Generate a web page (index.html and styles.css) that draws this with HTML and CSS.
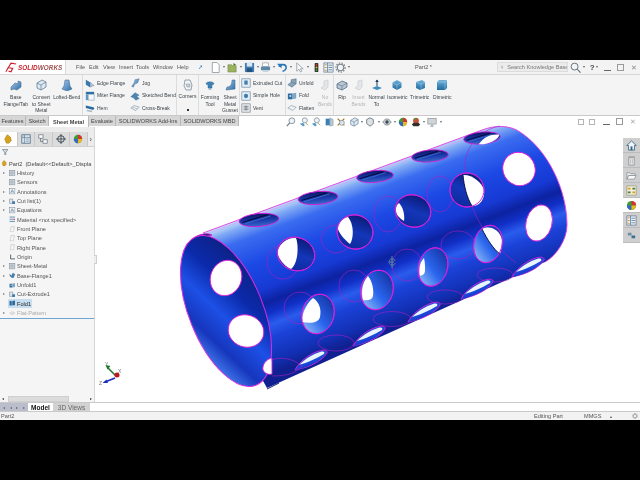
FILE: index.html
```html
<!DOCTYPE html>
<html lang="en">
<head>
<meta charset="utf-8">
<title>Part2 - SOLIDWORKS</title>
<link rel="stylesheet" href="styles.css">
</head>
<body>
<svg class="defs" width="0" height="0" aria-hidden="true">
  <defs>
    <linearGradient id="g-blue" x1="0" y1="0" x2="1" y2="1"><stop offset="0" stop-color="#a9c7ea"/><stop offset="1" stop-color="#2c6ea8"/></linearGradient>
    <linearGradient id="g-cube" x1="0" y1="0" x2="0" y2="1"><stop offset="0" stop-color="#6fb2dc"/><stop offset="1" stop-color="#1f6a9e"/></linearGradient>
    <symbol id="i-sheet" viewBox="0 0 12 12"><path d="M1 8 5 4l3 1V2l3 1v5l-4 3-3-1-3 1z" fill="url(#g-blue)" stroke="#46708f" stroke-width=".6"/></symbol>
    <symbol id="i-box" viewBox="0 0 12 12"><path d="M2 4 7 1l4 2v5l-5 3-4-2z" fill="#dfe8f0" stroke="#4b6f8e" stroke-width=".7"/><path d="M2 4l4 2 5-3M6 6v5" fill="none" stroke="#4b6f8e" stroke-width=".6"/></symbol>
    <symbol id="i-loft" viewBox="0 0 12 12"><path d="M4 1h4l1 6 2 3-5 2-5-2 2-3z" fill="url(#g-blue)" stroke="#2c5f88" stroke-width=".5"/></symbol>
    <symbol id="i-edge" viewBox="0 0 12 12"><path d="M1 2l5 3v6L1 8z" fill="#3a78b0"/><path d="M6 5l5 4-5 2z" fill="#a8c4dc" stroke="#456" stroke-width=".3"/></symbol>
    <symbol id="i-miter" viewBox="0 0 12 12"><path d="M1 1h10v3H1z" fill="#2f6fa5"/><path d="M1 4h3v7H1z" fill="#5c9ac8"/><path d="M4 4h7v7H4z" fill="#f4f8fb" stroke="#5a7f9c" stroke-width=".5"/></symbol>
    <symbol id="i-hem" viewBox="0 0 12 12"><path d="M1 3l9 2c2 1 1 3-1 3L1 6z" fill="#2d6aa0"/><path d="M2 8l7 1-1 2-6-1z" fill="#a9bdcd"/></symbol>
    <symbol id="i-jog" viewBox="0 0 12 12"><path d="M2 10l3-4 1-4 5-1-2 5-3 1-2 4z" fill="url(#g-blue)" stroke="#3f6a8c" stroke-width=".5"/></symbol>
    <symbol id="i-bend" viewBox="0 0 12 12"><path d="M1 7l5-5 5 3-3 1 3 3-4 2-3-3z" fill="#4a86b4" stroke="#2a4f70" stroke-width=".4"/></symbol>
    <symbol id="i-cross" viewBox="0 0 12 12"><path d="M1 6l4-3 6 2-4 4z" fill="#eef2f5" stroke="#7b8d9b" stroke-width=".7"/><path d="M3 5l6 2" stroke="#7b8d9b" stroke-width=".5"/></symbol>
    <symbol id="i-corner" viewBox="0 0 12 12"><path d="M3 1h5l2 5-1 5H4L2 7z" fill="#f2f4f6" stroke="#6e7f8c" stroke-width=".7"/><path d="M4 5h4v3H5z" fill="#c7d2da" stroke="#6e7f8c" stroke-width=".4"/></symbol>
    <symbol id="i-form" viewBox="0 0 12 12"><path d="M2 5c0-3 8-3 8 0l-2 1v3H4V6z" fill="#3f83b6" stroke="#255f88" stroke-width=".4"/><path d="M4 9h4l-1 2H5z" fill="#9fb8ca"/></symbol>
    <symbol id="i-gusset" viewBox="0 0 12 12"><path d="M8 1h3v9l-9 1 1-3c3 0 5-2 5-7z" fill="url(#g-blue)" stroke="#2e5f87" stroke-width=".5"/></symbol>
    <symbol id="i-cut" viewBox="0 0 12 12"><rect x="1" y="1" width="10" height="10" fill="#e6edf3" stroke="#527a9b" stroke-width=".7"/><path d="M4 3h4v5H4z" fill="#3f7fb2"/></symbol>
    <symbol id="i-hole" viewBox="0 0 12 12"><rect x="1" y="1" width="10" height="10" fill="#e6edf3" stroke="#527a9b" stroke-width=".7"/><circle cx="6" cy="6" r="2.6" fill="#3f7fb2"/></symbol>
    <symbol id="i-vent" viewBox="0 0 12 12"><rect x="1" y="1" width="10" height="10" fill="#e6e9ec" stroke="#6b7680" stroke-width=".7"/><path d="M3 4h6M3 6h6M3 8h6M6 3v6" stroke="#555f68" stroke-width=".7"/></symbol>
    <symbol id="i-unfold" viewBox="0 0 12 12"><path d="M1 8l4-3V2l6-1v6l-5 4z" fill="#8aa5ba" stroke="#34556f" stroke-width=".5"/><path d="M5 5l6 2" stroke="#34556f" stroke-width=".4"/></symbol>
    <symbol id="i-fold" viewBox="0 0 12 12"><path d="M1 3h5v7H1z" fill="#2f6da3"/><path d="M6 3l5-1v7l-5 1z" fill="#7da7c6"/><path d="M3 5h2v2H3z" fill="#dde7ef"/></symbol>
    <symbol id="i-flatten" viewBox="0 0 12 12"><path d="M1 6l4-3 6 2-4 4z" fill="#edf1f4" stroke="#7e919f" stroke-width=".7"/></symbol>
    <symbol id="i-nobend" viewBox="0 0 12 12"><path d="M2 9l3-2V2l4-1v7l-3 3z" fill="#e4e6e8" stroke="#c4c8cb" stroke-width=".6"/></symbol>
    <symbol id="i-rip" viewBox="0 0 12 12"><path d="M1 5l5-3 5 2v4l-5 3-5-2z" fill="#b8c7d3" stroke="#43607a" stroke-width=".7"/><path d="M1 5l5 2 5-3M6 7v4" fill="none" stroke="#43607a" stroke-width=".5"/></symbol>
    <symbol id="i-normal" viewBox="0 0 12 12"><path d="M1 9l5-2 5 2-5 2z" fill="#3e8bc0"/><path d="M6 1v6" stroke="#1d3f5c" stroke-width="1"/><path d="M4.2 3 6 .5 7.8 3z" fill="#1d3f5c"/></symbol>
    <symbol id="i-iso" viewBox="0 0 12 12"><path d="M6 1l4.500 2.500v5L6 11 1.500 8.500v-5z" fill="url(#g-cube)"/><path d="M1.500 3.500 6 6l4.500-2.500M6 6v5" fill="none" stroke="#cfe3f0" stroke-width=".4"/></symbol>
    <symbol id="i-tri" viewBox="0 0 12 12"><path d="M2 3l6-2 3 2v6l-5 2-4-2z" fill="url(#g-cube)"/><path d="M2 3l5 2 4-2M7 5v6" fill="none" stroke="#cfe3f0" stroke-width=".4"/></symbol>
    <symbol id="i-dim" viewBox="0 0 12 12"><path d="M3 1h8v8l-2 2H1V3z" fill="url(#g-cube)"/><path d="M1 3h8l2-2M9 3v8" fill="none" stroke="#cfe3f0" stroke-width=".4"/></symbol>
    <symbol id="i-doc" viewBox="0 0 12 12"><path d="M2.500 .5h5l2.500 2.500v8.500h-7.500z" fill="#fff" stroke="#7d8a94" stroke-width=".8"/></symbol>
    <symbol id="i-open" viewBox="0 0 12 12"><path d="M1 3h4l1 1h4v7H1z" fill="#9bb35e" stroke="#5f7434" stroke-width=".5"/><path d="M7 4V1l3 2z" fill="#4c7a23"/></symbol>
    <symbol id="i-save" viewBox="0 0 12 12"><rect x="1" y="1" width="10" height="10" fill="#3f7bb0"/><rect x="3" y="1" width="6" height="4" fill="#dbe7f0"/><rect x="3" y="7" width="6" height="4" fill="#22527c"/></symbol>
    <symbol id="i-print" viewBox="0 0 12 12"><rect x="3" y="1" width="6" height="4" fill="#fff" stroke="#74818c" stroke-width=".6"/><rect x="1" y="5" width="10" height="4" fill="#5b87a9"/><rect x="3" y="9" width="6" height="2" fill="#c7d3dc"/></symbol>
    <symbol id="i-undo" viewBox="0 0 12 12"><path d="M2 5c2-3 8-3 8 1 0 2-2 4-4 4" fill="none" stroke="#2a77b8" stroke-width="1.700"/><path d="M0 2h5v5z" fill="#2a77b8"/></symbol>
    <symbol id="i-arrow" viewBox="0 0 12 12"><path d="M3 1v9l2.500-2 1.500 3 1.500-.8-1.500-2.800h3z" fill="#f8f8f8" stroke="#7b8791" stroke-width=".7"/></symbol>
    <symbol id="i-light" viewBox="0 0 12 12"><rect x="4" y="1" width="4" height="10" rx="1" fill="#333"/><circle cx="6" cy="3" r="1" fill="#d9342b"/><circle cx="6" cy="6" r="1" fill="#e9b91f"/><circle cx="6" cy="9" r="1" fill="#3f9c35"/></symbol>
    <symbol id="i-list" viewBox="0 0 12 12"><rect x="1" y="1" width="10" height="10" fill="#eef2f5" stroke="#61788b" stroke-width=".8"/><path d="M5 1v10M6 3.500h4M6 6h4M6 8.500h4" stroke="#3f6f95" stroke-width=".8"/><path d="M2 3h2M2 6h2M2 9h2" stroke="#d08a2e" stroke-width="1"/></symbol>
    <symbol id="i-gear" viewBox="0 0 12 12"><circle cx="6" cy="6" r="3.500" fill="none" stroke="#77838c" stroke-width="1.200"/><circle cx="6" cy="6" r="5" fill="none" stroke="#77838c" stroke-width="1.300" stroke-dasharray="1.500 1.500"/></symbol>
    <symbol id="i-search" viewBox="0 0 12 12"><circle cx="5" cy="5" r="3.800" fill="none" stroke="#5d6b76" stroke-width="1"/><path d="M8 8l3.500 3.500" stroke="#5d6b76" stroke-width="1.200"/></symbol>
    <symbol id="i-zoomfit" viewBox="0 0 12 12"><circle cx="7" cy="4.500" r="3.500" fill="#eef3f7" stroke="#6c7d8a" stroke-width=".9"/><path d="M4.500 7 1 11" stroke="#6c7d8a" stroke-width="1.400"/></symbol>
    <symbol id="i-prev" viewBox="0 0 12 12"><path d="M1 8l4-1 2 3-2 1.500z" fill="#5f9ac5"/><circle cx="7" cy="4" r="3" fill="#eef3f7" stroke="#6c7d8a" stroke-width=".8"/><path d="M8 7l3 3" stroke="#8a4" stroke-width="1"/></symbol>
    <symbol id="i-section" viewBox="0 0 12 12"><path d="M2 2h5v8H2z" fill="#3e7fb3"/><path d="M7 1l4 2v7l-4 1z" fill="#b7c8d5" stroke="#53708a" stroke-width=".4"/></symbol>
    <symbol id="i-dyn" viewBox="0 0 12 12"><path d="M2 2l8 8M10 2l-8 8" stroke="#a8741f" stroke-width="1.500"/><circle cx="7" cy="7" r="3" fill="#d9e3ea" stroke="#5a7084" stroke-width=".6"/></symbol>
    <symbol id="i-hide" viewBox="0 0 12 12"><path d="M1 6c3-5 7-5 10 0-3 5-7 5-10 0z" fill="#c9d0d5" stroke="#55616b" stroke-width=".7"/><circle cx="6" cy="6" r="2" fill="#3c4750"/></symbol>
    <symbol id="i-ball" viewBox="0 0 12 12"><circle cx="6" cy="6" r="5" fill="#3f9a3c"/><path d="M6 1a5 5 0 0 1 5 5H6z" fill="#d9342b"/><path d="M1 6a5 5 0 0 0 5 5V6z" fill="#2f68c5"/><path d="M6 6h5a5 5 0 0 1-5 5z" fill="#e8b81f"/></symbol>
    <symbol id="i-scene" viewBox="0 0 12 12"><circle cx="6" cy="4.500" r="3.500" fill="#c9513a"/><path d="M3 4a3 3 0 0 1 5-2z" fill="#3f9a3c"/><path d="M1 9l2-2h6l2 2-2 2H3z" fill="#33302c"/></symbol>
    <symbol id="i-monitor" viewBox="0 0 12 12"><rect x="1" y="1.500" width="10" height="7" fill="#d1d5d8" stroke="#7c868e" stroke-width=".7"/><path d="M4 11h4M6 9v2" stroke="#7c868e"/></symbol>
    <symbol id="i-home" viewBox="0 0 12 12"><path d="M6 1 .8 6h2v5h6.400V6h2z" fill="#eef4f8" stroke="#30627f" stroke-width=".9"/><rect x="5" y="7" width="2" height="4" fill="#30627f"/></symbol>
    <symbol id="i-trash" viewBox="0 0 12 12"><path d="M3 3h6v8H3zM2.500 2h7" fill="#eaeaea" stroke="#858b90" stroke-width=".8"/><path d="M5 4.500v5M7 4.500v5" stroke="#858b90" stroke-width=".5"/></symbol>
    <symbol id="i-folder" viewBox="0 0 12 12"><path d="M1 3h3l1 1h5v2H3L1 10z" fill="#eee" stroke="#7a8288" stroke-width=".7"/><path d="M1 10l2-4h8l-2 4z" fill="#f8f8f8" stroke="#7a8288" stroke-width=".7"/></symbol>
    <symbol id="i-appear" viewBox="0 0 12 12"><rect x="1" y="1" width="10" height="10" fill="#f2eddc" stroke="#7f8a55" stroke-width=".6"/><path d="M2 3h3v2H2zM7 7h3v2H7z" fill="#d6a61e"/><path d="M7 3h3v2H7zM2 7h3v2H2z" fill="#4b7f3a"/></symbol>
    <symbol id="i-small" viewBox="0 0 12 12"><path d="M2 3h4v3H2z" fill="#6f8ea5"/><path d="M6 6h4v3H6z" fill="#3b6f96"/></symbol>
    <symbol id="i-cube" viewBox="0 0 12 12"><path d="M6 1l4 2v5l-4 3-4-3V3z" fill="#dde2e5" stroke="#596773" stroke-width=".9"/></symbol>
    <symbol id="i-feat" viewBox="0 0 12 12"><path d="M2 6l3-5 2 1 2 2 1 4-3 3H4z" fill="#d9a21c" stroke="#8d6a10" stroke-width=".5"/></symbol>
    <symbol id="i-prop" viewBox="0 0 12 12"><rect x="1" y="1" width="10" height="10" fill="#e8eef3" stroke="#39617f" stroke-width=".9"/><path d="M1 4h10M4 1v10M5.500 6h4M5.500 8.500h4" stroke="#39617f" stroke-width=".7"/></symbol>
    <symbol id="i-config" viewBox="0 0 12 12"><rect x="1" y="1" width="5" height="4" fill="#fff" stroke="#596773" stroke-width=".8"/><rect x="6" y="7" width="5" height="4" fill="#fff" stroke="#596773" stroke-width=".8"/><path d="M3 5v4h3" fill="none" stroke="#596773" stroke-width=".8"/></symbol>
    <symbol id="i-dim2" viewBox="0 0 12 12"><circle cx="6" cy="6" r="4" fill="none" stroke="#27333c" stroke-width="1"/><path d="M6 0v12M0 6h12" stroke="#27333c" stroke-width=".9"/></symbol>
    <symbol id="i-filter" viewBox="0 0 12 12"><path d="M1 1h10L7 6v5L5 10V6z" fill="#d9e3ea" stroke="#3f5d72" stroke-width="1"/></symbol>
    <symbol id="i-folder-t" viewBox="0 0 12 12"><rect x="1" y="1" width="10" height="10" fill="#dde3e7" stroke="#5d7283" stroke-width=".8"/><path d="M4 1v10M7 1v10M1 4h10M1 7h10" stroke="#5d7283" stroke-width=".5"/></symbol>
    <symbol id="i-annot" viewBox="0 0 12 12"><rect x="1" y="1" width="10" height="10" fill="#eef2f5" stroke="#5d7283" stroke-width=".8"/><path d="M3 9l3-6 3 6M4 7h4" fill="none" stroke="#3f6f95" stroke-width=".9"/></symbol>
    <symbol id="i-cutlist" viewBox="0 0 12 12"><path d="M1 2h6v8H1z" fill="#dfe6eb" stroke="#49606f" stroke-width=".7"/><path d="M6 6h5v5H6z" fill="#3a7bb0"/></symbol>
    <symbol id="i-mat" viewBox="0 0 12 12"><path d="M1 2h10M1 6h8M1 10h10" stroke="#3a6f99" stroke-width="1.400"/><path d="M9 5h2v2H9z" fill="#c14" /></symbol>
    <symbol id="i-plane" viewBox="0 0 12 12"><path d="M4 1h6L8 11H2z" fill="none" stroke="#7e8c97" stroke-width=".8" stroke-dasharray="1.500 .8"/></symbol>
    <symbol id="i-origin" viewBox="0 0 12 12"><path d="M3 1v8h8" fill="none" stroke="#2b3134" stroke-width="1.300"/></symbol>
    <symbol id="i-flange" viewBox="0 0 12 12"><path d="M1 4l4 3 2-5 4 2-3 7-3-1-3-2z" fill="#3f7fb2" stroke="#1f5276" stroke-width=".4"/></symbol>
    <symbol id="i-foldtree" viewBox="0 0 12 12"><path d="M1 2h4v8H1z" fill="#2c6699"/><path d="M6 2l5-1v8l-5 1z" fill="#2c6699"/></symbol>
    <symbol id="i-flat" viewBox="0 0 12 12"><path d="M1 6l4-3 6 2-4 4z" fill="#dfe3e6" stroke="#a6aeb4" stroke-width=".6"/></symbol>

    <linearGradient id="body" gradientUnits="userSpaceOnUse" x1="345" y1="180" x2="400" y2="325">
      <stop offset="0" stop-color="#c3dcfa"/><stop offset=".05" stop-color="#7fa9f4"/><stop offset=".13" stop-color="#3a6cf0"/>
      <stop offset=".3" stop-color="#1c48e4"/><stop offset=".47" stop-color="#1739d4"/><stop offset=".56" stop-color="#0c22a0"/>
      <stop offset=".63" stop-color="#1230c8"/><stop offset=".7" stop-color="#2a5cec"/><stop offset=".78" stop-color="#1b42d8"/>
      <stop offset=".92" stop-color="#1230b4"/><stop offset="1" stop-color="#102090"/>
    </linearGradient>
    <linearGradient id="inner" gradientUnits="userSpaceOnUse" x1="190" y1="245" x2="255" y2="385">
      <stop offset="0" stop-color="#0a1560"/><stop offset=".22" stop-color="#0d2490"/><stop offset=".36" stop-color="#0b2aaa"/>
      <stop offset=".52" stop-color="#1d50e6"/><stop offset=".68" stop-color="#1636bd"/><stop offset=".8" stop-color="#3f74e8"/>
      <stop offset=".9" stop-color="#1a3cc2"/><stop offset=".96" stop-color="#8cc0f4"/><stop offset="1" stop-color="#0c1e80"/>
    </linearGradient>
    <linearGradient id="wall" x1="0" y1="0" x2="0" y2="1"><stop offset="0" stop-color="#0b1b7a"/><stop offset=".5" stop-color="#1436b8"/><stop offset="1" stop-color="#0e2a9e"/></linearGradient>
    <linearGradient id="wall-light" x1=".8" y1="0" x2=".2" y2="1"><stop offset="0" stop-color="#13309f"/><stop offset=".55" stop-color="#2a66ee"/><stop offset="1" stop-color="#8fbcf6"/></linearGradient>
    <linearGradient id="wall-top" x1="0" y1="0" x2="0" y2="1"><stop offset="0" stop-color="#0a1560"/><stop offset=".55" stop-color="#1c3cb0"/><stop offset="1" stop-color="#3c6cc8"/></linearGradient>
    <g id="slot">
      <ellipse class="edge wall-top-fill" rx="20" ry="6.500"/>
      <path class="stripe-dark" d="M-17 1 9-4.500"/>
      <path class="stripe-soft" d="M-14 2.500 12-3"/>
    </g>
    <g id="low">
      <path class="edge low-fill" d="M-16 10C-12 2-2-6 8-9c6-2 9 0 8 2C12 0 0 7-16 10z"/>
      <path class="low-white" d="M-12 5C-6-1 2-6 9-8c4-1 5 0 4 2C6-2-4 3-12 5z"/>
      <path class="low-dark" d="M-16 10C-8 9 2 4 9 0c-8 2-18 5-25 10z"/>
    </g>
  </defs>
</svg>

<div class="letterbox"></div>
<div class="app">
  <header class="titlebar">
    <div class="logo">
      <svg class="logo-mark" viewBox="0 0 14 12"><path d="M1 11 7 1l6 1M3 6l6 1-2 4-3-1" fill="none" stroke="#c8202a" stroke-width="1.300"/></svg>
      <span class="logo-text"><b>SOLID</b>WORKS</span>
    </div>
    <nav class="menu">
      <span class="m1">File</span><span class="m2">Edit</span><span class="m3">View</span><span class="m4">Insert</span><span class="m5">Tools</span><span class="m6">Window</span><span class="m7">Help</span><span class="m8">➚</span>
    </nav>
    <div class="quick">
      <svg class="qi"><use href="#i-doc"/></svg><i class="dd"></i>
      <svg class="qi"><use href="#i-open"/></svg><i class="dd"></i>
      <svg class="qi"><use href="#i-save"/></svg><i class="dd"></i>
      <svg class="qi"><use href="#i-print"/></svg><i class="dd"></i>
      <svg class="qi"><use href="#i-undo"/></svg><i class="dd"></i>
      <svg class="qi"><use href="#i-arrow"/></svg><i class="dd"></i>
      <svg class="qi"><use href="#i-light"/></svg>
      <svg class="qi"><use href="#i-list"/></svg>
      <svg class="qi"><use href="#i-gear"/></svg><i class="dd"></i>
    </div>
    <div class="doc-name">Part2 *</div>
    <div class="search"><span class="search-q">♀</span><span>Search Knowledge Base</span></div>
    <div class="title-end">
      <svg class="qi s-search"><use href="#i-search"/></svg><i class="dd"></i>
      <span class="help">?</span><i class="dd"></i>
      <span class="win min"></span><span class="win box"></span><span class="win cls">✕</span>
    </div>
  </header>

  <section class="ribbon">
    <div class="grp g1">
      <div class="tool"><svg class="big"><use href="#i-sheet"/></svg><span>Base<br>Flange/Tab</span></div>
      <div class="tool"><svg class="big"><use href="#i-box"/></svg><span>Convert<br>to Sheet<br>Metal</span></div>
      <div class="tool"><svg class="big"><use href="#i-loft"/></svg><span>Lofted-Bend</span></div>
    </div>
    <div class="grp g2">
      <div class="col c-a">
        <div class="line"><svg class="sm"><use href="#i-edge"/></svg>Edge Flange</div>
        <div class="line"><svg class="sm"><use href="#i-miter"/></svg>Miter Flange</div>
        <div class="line"><svg class="sm"><use href="#i-hem"/></svg>Hem</div>
      </div>
      <div class="col">
        <div class="line"><svg class="sm"><use href="#i-jog"/></svg>Jog</div>
        <div class="line"><svg class="sm"><use href="#i-bend"/></svg>Sketched Bend</div>
        <div class="line"><svg class="sm"><use href="#i-cross"/></svg>Cross-Break</div>
      </div>
    </div>
    <div class="grp g3">
      <div class="tool wide"><svg class="big"><use href="#i-corner"/></svg><span class="corners">Corners</span><i class="dot"></i></div>
    </div>
    <div class="grp g4">
      <div class="tool t20"><svg class="big"><use href="#i-form"/></svg><span>Forming<br>Tool</span></div>
      <div class="tool t20"><svg class="big"><use href="#i-gusset"/></svg><span>Sheet<br>Metal<br>Gusset</span></div>
    </div>
    <div class="grp g5">
      <div class="col">
        <div class="line"><svg class="sm"><use href="#i-cut"/></svg>Extruded Cut</div>
        <div class="line"><svg class="sm"><use href="#i-hole"/></svg>Simple Hole</div>
        <div class="line"><svg class="sm"><use href="#i-vent"/></svg>Vent</div>
      </div>
    </div>
    <div class="grp g6">
      <div class="col c-f">
        <div class="line"><svg class="sm"><use href="#i-unfold"/></svg>Unfold</div>
        <div class="line"><svg class="sm"><use href="#i-fold"/></svg>Fold</div>
        <div class="line"><svg class="sm"><use href="#i-flatten"/></svg>Flatten</div>
      </div>
      <div class="tool t16 off"><svg class="big"><use href="#i-nobend"/></svg><span>No<br>Bends</span></div>
    </div>
    <div class="grp g7">
      <div class="tool t16"><svg class="big"><use href="#i-rip"/></svg><span>Rip</span></div>
      <div class="tool t17 off"><svg class="big"><use href="#i-nobend"/></svg><span>Insert<br>Bends</span></div>
      <div class="tool t19"><svg class="big"><use href="#i-normal"/></svg><span>Normal<br>To</span></div>
      <div class="tool t23"><svg class="big"><use href="#i-iso"/></svg><span>Isometric</span></div>
      <div class="tool t23"><svg class="big"><use href="#i-tri"/></svg><span>Trimetric</span></div>
      <div class="tool t23"><svg class="big"><use href="#i-dim"/></svg><span>Dimetric</span></div>
    </div>
  </section>

  <div class="tabrow">
    <div class="tabs">
      <span class="tab w26">Features</span><span class="tab w23">Sketch</span><span class="tab w40 on">Sheet Metal</span><span class="tab w27">Evaluate</span><span class="tab w65">SOLIDWORKS Add-Ins</span><span class="tab w58">SOLIDWORKS MBD</span>
    </div>
    <div class="hud">
      <svg class="hi"><use href="#i-zoomfit"/></svg>
      <svg class="hi"><use href="#i-prev"/></svg>
      <svg class="hi"><use href="#i-prev"/></svg>
      <svg class="hi"><use href="#i-section"/></svg>
      <svg class="hi"><use href="#i-dyn"/></svg>
      <svg class="hi"><use href="#i-box"/></svg><i class="dd"></i>
      <svg class="hi"><use href="#i-cube"/></svg><i class="dd"></i>
      <svg class="hi"><use href="#i-hide"/></svg><i class="dd"></i>
      <svg class="hi"><use href="#i-ball"/></svg>
      <svg class="hi"><use href="#i-scene"/></svg><i class="dd"></i>
      <svg class="hi"><use href="#i-monitor"/></svg><i class="dd"></i>
    </div>
    <div class="vp-ctrl"><span class="v-b"></span><span class="v-b"></span><span class="win min"></span><span class="win box"></span><span class="win cls">✕</span></div>
  </div>

  <main class="work">
    <aside class="panel">
      <div class="ptabs">
        <span class="ptab on"><svg class="pi"><use href="#i-feat"/></svg></span>
        <span class="ptab"><svg class="pi"><use href="#i-prop"/></svg></span>
        <span class="ptab"><svg class="pi"><use href="#i-config"/></svg></span>
        <span class="ptab"><svg class="pi"><use href="#i-dim2"/></svg></span>
        <span class="ptab"><svg class="pi"><use href="#i-ball"/></svg></span>
        <span class="pmore">›</span>
      </div>
      <div class="filter"><svg class="ti"><use href="#i-filter"/></svg></div>
      <ul class="tree">
        <li class="root"><svg class="ti"><use href="#i-feat"/></svg>Part2 &nbsp;(Default&lt;&lt;Default&gt;_Displa</li>
        <li><i class="exp"></i><svg class="ti"><use href="#i-folder-t"/></svg>History</li>
        <li><i class="noexp"></i><svg class="ti"><use href="#i-folder-t"/></svg>Sensors</li>
        <li><i class="exp"></i><svg class="ti"><use href="#i-annot"/></svg>Annotations</li>
        <li><i class="exp"></i><svg class="ti"><use href="#i-cutlist"/></svg>Cut list(1)</li>
        <li><i class="exp"></i><svg class="ti"><use href="#i-annot"/></svg>Equations</li>
        <li><i class="noexp"></i><svg class="ti"><use href="#i-mat"/></svg>Material &lt;not specified&gt;</li>
        <li><i class="noexp"></i><svg class="ti"><use href="#i-plane"/></svg>Front Plane</li>
        <li><i class="noexp"></i><svg class="ti"><use href="#i-plane"/></svg>Top Plane</li>
        <li><i class="noexp"></i><svg class="ti"><use href="#i-plane"/></svg>Right Plane</li>
        <li><i class="noexp"></i><svg class="ti"><use href="#i-origin"/></svg>Origin</li>
        <li><i class="exp"></i><svg class="ti"><use href="#i-folder-t"/></svg>Sheet-Metal</li>
        <li><i class="exp"></i><svg class="ti"><use href="#i-flange"/></svg>Base-Flange1</li>
        <li><i class="noexp"></i><svg class="ti"><use href="#i-fold"/></svg>Unfold1</li>
        <li><i class="exp"></i><svg class="ti"><use href="#i-cutlist"/></svg>Cut-Extrude1</li>
        <li class="sel"><i class="noexp"></i><svg class="ti"><use href="#i-foldtree"/></svg>Fold1</li>
        <li class="dim"><i class="exp"></i><svg class="ti"><use href="#i-flat"/></svg>Flat-Pattern</li>
      </ul>
      <div class="rollback"></div>
      <div class="pscroll"><i class="sl">◂</i><span class="thumb"></span><i class="sr">▸</i></div>
      <span class="grip"></span>
    </aside>

    <div class="view">
      <svg class="model" viewBox="95 127 527 276" role="img" aria-label="Perforated sheet metal cylinder">
        <path class="body" d="M203 233 482 130C495 125 510 125 520 132 548 150 567 190 567 225 567 240 556 256 545 262L513 277 267 388C240 340 210 280 203 233z"/>
        <path class="seam" d="M206 234 482 133"/>
        <path class="edge-line" d="M203 233 482 130C495 125 510 125 520 132 548 150 567 190 567 225 567 240 556 256 545 262"/>
        <path class="ghost" d="M500 126C478 130 463 150 465 170 467 205 480 235 516 263"/>

        <ellipse class="ghost" cx="336" cy="239" rx="15" ry="14"/>
        <ellipse class="ghost" cx="283" cy="262" rx="16" ry="17"/>
        <ellipse class="ghost" cx="388" cy="214" rx="14" ry="18"/>
        <ellipse class="ghost" cx="440" cy="194" rx="13" ry="18"/>
        <ellipse class="ghost" cx="458" cy="245" rx="17" ry="14"/>
        <ellipse class="ghost" cx="407" cy="265" rx="15" ry="16"/>
        <ellipse class="ghost" cx="300" cy="308" rx="16" ry="16"/>
        <ellipse class="ghost" cx="354" cy="286" rx="15" ry="16"/>
        <ellipse class="ghost" cx="336" cy="343" rx="18" ry="8"/>
        <ellipse class="ghost" cx="392" cy="319" rx="19" ry="7.500"/>
        <ellipse class="ghost" cx="445" cy="297" rx="18" ry="7"/>
        <ellipse class="ghost" cx="495" cy="275" rx="18" ry="7"/>

        <use href="#slot" transform="translate(259 220) rotate(-5)"/>
        <use href="#slot" transform="translate(318 198) rotate(-5)"/>
        <use href="#slot" transform="translate(375 176.500) scale(.92) rotate(-5)"/>
        <use href="#slot" transform="translate(430 156) scale(.92) rotate(-5)"/>
        <g transform="translate(482 138) scale(.92) rotate(-5)">
          <use href="#slot"/>
          <path class="void" d="M-4 6.500C0 1 8-4 19-2 18 3 6 8-4 6.500z"/>
        </g>
        <path class="edge wall-top-fill" d="M191 240C196 235 206 232 212 235 202 238 196 241 191 244z"/>

        <g transform="translate(296 254)">
          <ellipse class="edge wall-fill" rx="19" ry="16.500" transform="rotate(20)"/>
          <path class="void" d="M0-16C-12-17-20-6-18 1-16 6-12 12-5 15 2 10 3-8 0-16z"/>
          <ellipse class="edge none" rx="19" ry="16.500" transform="rotate(20)"/>
        </g>
        <g transform="translate(355 232)">
          <ellipse class="edge wall-fill" rx="18" ry="17" transform="rotate(20)"/>
          <path class="void" d="M-7-15C-13-14-18-8-17-3-15 3-10 8-5 12-1 6-1-8-7-15z"/>
          <ellipse class="edge none" rx="18" ry="17" transform="rotate(20)"/>
        </g>
        <g transform="translate(413 211)">
          <ellipse class="edge wall-fill" rx="18" ry="16" transform="rotate(20)"/>
          <path class="void" d="M-14-8C-18-5-18 1-15 5-13 7-11 9-9 10-8 4-10-4-14-8z"/>
          <ellipse class="edge none" rx="18" ry="16" transform="rotate(20)"/>
        </g>
        <g transform="translate(467 190)">
          <ellipse class="edge wall-fill" rx="17" ry="17" transform="rotate(20)"/>
          <path class="void" d="M-4-15C4-16 15-8 17 0 18 8 14 16 5 16 0 8-3-4-4-15z"/>
          <path class="stripe-black" d="M-4-15C-3-4 0 8 5 16"/>
          <ellipse class="edge none" rx="17" ry="17" transform="rotate(20)"/>
        </g>

        <g transform="translate(318 314)">
          <ellipse class="edge light-fill" rx="16" ry="20" transform="rotate(15)"/>
          <path class="void" d="M-5-16C-11-11-16-2-16 8-6 10 1 8 2 3 4-6 0-13-5-16z"/>
          <ellipse class="edge none" rx="16" ry="20" transform="rotate(15)"/>
        </g>
        <g transform="translate(377 290)">
          <ellipse class="edge light-fill" rx="16" ry="20" transform="rotate(15)"/>
          <path class="void" d="M-9-14C-15-7-16 2-14 10-9 11-5 10-4 6-3-1-5-9-9-14z"/>
          <ellipse class="edge none" rx="16" ry="20" transform="rotate(15)"/>
        </g>
        <g transform="translate(433 267)">
          <ellipse class="edge light-fill" rx="14.500" ry="19.500" transform="rotate(15)"/>
          <path class="void" d="M-9-9C-14-4-14 4-13 9-10 8-8 7-8 3-8-1-8-5-9-9z"/>
          <ellipse class="edge none" rx="14.500" ry="19.500" transform="rotate(15)"/>
        </g>
        <g transform="translate(488 244)">
          <ellipse class="edge light-fill" rx="14" ry="19" transform="rotate(15)"/>
          <path class="void" d="M-6-15C2-19 12-14 14-4 14 2 13 7 12 10 6 6-1-5-6-15z"/>
          <path class="stripe-black" d="M-6-15C-1-5 6 6 12 10"/>
          <ellipse class="edge none" rx="14" ry="19" transform="rotate(15)"/>
        </g>

        <use href="#low" transform="translate(311 360)"/>
        <use href="#low" transform="translate(369 336)"/>
        <use href="#low" transform="translate(424 312)"/>
        <use href="#low" transform="translate(477 289)"/>
        <use href="#low" transform="translate(528 267)"/>

        <ellipse class="edge void" cx="519" cy="169" rx="16" ry="17" transform="rotate(-30 519 169)"/>
        <ellipse class="edge void" cx="539" cy="223" rx="13" ry="18.500" transform="rotate(15 539 223)"/>

        <ellipse class="rim" cx="226" cy="311" rx="80" ry="37" transform="rotate(68 226 311)"/>
        <ellipse class="edge void" cx="226" cy="278" rx="15.500" ry="18" transform="rotate(20 226 278)"/>
        <ellipse class="edge void" cx="246" cy="331" rx="18" ry="16" transform="rotate(20 246 331)"/>
        <path class="edge void" d="M272 358C266 359 262 365 263 370 265 374 269 375 272 374z"/>
        <path class="ghost" d="M271 360C285 355 298 362 302 366 296 373 288 376 272 376"/>
        <path class="seal" d="M267 389 279 383"/>

        <g class="cursor">
          <path d="M392 256v12M389 262c0-4 6-4 6-1M389 262c0 4 6 4 6 1M390 262h4"/>
        </g>
        <g class="triad">
          <path class="ax-g" d="M116 376 108 368"/><path class="ag" d="M105.500 365l5 1-3 3.500z"/>
          <path class="ax-b" d="M115 378 105 382"/><path class="ab" d="M102.500 383l4-3.500 1.500 3.500z"/>
          <circle class="ar" cx="117" cy="375" r="2.500"/>
          <text class="ax" x="118" y="373">X</text><text class="ax" x="105" y="366">Y</text><text class="ax" x="99" y="385">Z</text>
        </g>
      </svg>
    </div>

    <aside class="taskpane">
      <span class="tp"><svg class="tpi"><use href="#i-home"/></svg></span>
      <span class="tp"><svg class="tpi"><use href="#i-trash"/></svg></span>
      <span class="tp"><svg class="tpi"><use href="#i-folder"/></svg></span>
      <span class="tp"><svg class="tpi"><use href="#i-appear"/></svg></span>
      <span class="tp on"><svg class="tpi"><use href="#i-ball"/></svg></span>
      <span class="tp"><svg class="tpi"><use href="#i-list"/></svg></span>
      <span class="tp"><svg class="tpi"><use href="#i-small"/></svg></span>
    </aside>
  </main>

  <div class="bottomtabs">
    <div class="nav"><i>◂</i><i>◂</i><i>▸</i><i>▸</i></div>
    <span class="btab on">Model</span><span class="btab">3D Views</span>
  </div>
  <footer class="status">
    <span class="st-name">Part2</span>
    <span class="st-edit">Editing Part</span>
    <span class="st-unit">MMGS</span>
    <span class="st-dd">▴</span>
    <svg class="st-gear"><use href="#i-gear"/></svg>
  </footer>
</div>
<div class="letterbox"></div>
</body>
</html>
```

FILE: styles.css
```css
* { box-sizing: border-box; }
html, body { margin: 0; padding: 0; }
body {
  width: 640px; height: 480px; overflow: hidden; background: #000;
  font-family: "Liberation Sans", sans-serif;
  font-size: 5.6px; color: #3c4348; display: flex; flex-direction: column;
}
.defs { position: absolute; }
.letterbox { height: 60px; flex: none; background: #000; }
.app { height: 360px; flex: none; background: #f2f2f2; display: flex; flex-direction: column; filter: blur(.25px); }

.titlebar { height: 15px; flex: none; display: flex; align-items: center; background: #f3f3f3; border-bottom: 1px solid #d6d6d6; }
.logo { width: 66px; height: 100%; background: #fff; border-right: 1px solid #d8d8d8; display: flex; align-items: center; padding-left: 5px; gap: 1px; flex: none; }
.logo-mark { width: 12px; height: 11px; }
.logo-text { font: italic bold 6.3px "Liberation Sans", sans-serif; color: #a05050; letter-spacing: .1px; }
.logo-text b { color: #c8202a; }
.menu { width: 143px; display: flex; padding-left: 10px; flex: none; color: #555; }
.menu span { display: block; }
.m1 { width: 13px; } .m2 { width: 14px; } .m3 { width: 16px; } .m4 { width: 17px; } .m5 { width: 17px; } .m6 { width: 24px; } .m7 { width: 21px; } .m8 { color: #2a77b8; }
.quick { width: 143px; display: flex; align-items: center; padding-left: 1px; flex: none; }
.qi { width: 11px; height: 11px; flex: none; margin-right: 1px; }
.dd { width: 0; height: 0; border-left: 1.5px solid transparent; border-right: 1.500px solid transparent; border-top: 2px solid #666; margin: 0 1.800px 0 1px; flex: none; }
.doc-name { width: 143px; text-align: center; color: #555; flex: none; }
.search { width: 71px; height: 10px; background: #ececec; border: 1px solid #dcdcdc; display: flex; align-items: center; gap: 3px; padding-left: 2px; color: #777; white-space: nowrap; flex: none; margin-left: 2px; overflow: hidden; }
.search-q { color: #666; }
.title-end { display: flex; align-items: center; margin-left: 1px; }
.s-search { margin-left: 1px; }
.help { font-size: 8px; font-weight: 700; color: #444; margin-left: 3px; }
.win { display: block; width: 7px; height: 7px; flex: none; margin-left: 6px; color: #8a8a8a; font-size: 7px; line-height: 7px; text-align: center; }
.win.min { border-bottom: 1px solid #666; margin-left: 5px; }
.win.box { border: 1px solid #9a9a9a; }

.ribbon { height: 41px; flex: none; display: flex; background: #f4f4f4; border-bottom: 1px solid #c9c9c9; line-height: 6.5px; font-size: 5px; }
.grp { height: 100%; display: flex; border-right: 1px solid #dcdcdc; flex: none; padding-top: 2px; }
.g1 { width: 83px; padding-left: 3px; }
.g2 { width: 94px; padding-left: 2px; }
.g3 { width: 22px; }
.g4 { width: 41px; padding-left: 1px; }
.g5 { width: 46px; padding-left: 1px; }
.g6 { width: 48px; padding-left: 1px; }
.g7 { flex: 1; border-right: 0; }
.tool { width: 25.500px; display: flex; flex-direction: column; align-items: center; text-align: center; flex: none; white-space: nowrap; position: relative; }
.tool.wide { width: 100%; }
.t20 { width: 20px; } .t16 { width: 16px; } .t17 { width: 17px; } .t19 { width: 19px; } .t23 { width: 22.500px; }
.big { width: 12px; height: 12px; margin: 2px 0 3px; flex: none; }
.corners { margin-top: -1.500px; }
.off { color: #b5b5b5; }
.dot { width: 2px; height: 2px; background: #333; position: absolute; top: 32px; }
.col { display: flex; flex-direction: column; gap: 2.500px; padding-top: 1px; white-space: nowrap; }
.c-a { width: 45px; }
.c-f { width: 31px; }
.line { height: 10px; display: flex; align-items: center; gap: 2px; }
.sm { width: 10px; height: 10px; flex: none; }

.tabrow { height: 11px; flex: none; display: flex; background: #fff; }
.tabs { display: flex; width: 239px; flex: none; }
.tab { height: 10px; background: #d6d6d6; border-right: 1px solid #b9b9b9; display: flex; align-items: center; justify-content: center; white-space: nowrap; flex: none; color: #444; }
.tab.on { background: #fff; font-weight: 700; height: 11px; }
.w26 { width: 26px; } .w23 { width: 23px; } .w40 { width: 40px; } .w27 { width: 27px; } .w65 { width: 65px; } .w58 { width: 58px; }
.hud { display: flex; align-items: center; padding-left: 47px; flex: none; width: 330px; }
.hi { width: 10px; height: 10px; margin-right: 2.500px; flex: none; }
.hud .dd { margin: 0 2px 0 0; }
.vp-ctrl { display: flex; align-items: center; padding-left: 4px; }
.v-b { width: 6px; height: 6px; border: 1px solid #b5b5b5; margin-left: 5px; flex: none; }
.vp-ctrl .win { margin-left: 6px; color: #aaa; }
.vp-ctrl .win.min { margin-left: 8px; }

.work { height: 276px; flex: none; display: flex; background: #fff; border-bottom: 1px solid #c9c9c9; }
.panel { width: 95px; flex: none; background: #f5f5f5; border-right: 1px solid #d5d5d5; display: flex; flex-direction: column; position: relative; }
.ptabs { height: 20px; flex: none; display: flex; align-items: flex-end; background: #ececec; border-bottom: 1px solid #d0d0d0; }
.ptab { width: 17.500px; height: 14px; display: flex; align-items: center; justify-content: center; background: #dcdcdc; border-right: 1px solid #c8c8c8; flex: none; }
.ptab.on { background: #fff; }
.pmore { padding: 0 0 3px 2px; font-size: 7px; }
.pi { width: 10px; height: 10px; }
.filter { height: 12px; flex: none; padding: 1.500px 0 0 2px; }
.ti { width: 6.500px; height: 6.500px; flex: none; margin-right: 1.500px; }
.tree { list-style: none; margin: 0; padding: 0; color: #555; flex: none; }
.tree li { height: 9.330px; display: flex; align-items: center; white-space: nowrap; overflow: hidden; padding-left: 2.500px; }
.tree .root { padding-left: 1px; color: #444; }
.exp { width: 0; height: 0; border-left: 2px solid #777; border-top: 1.500px solid transparent; border-bottom: 1.500px solid transparent; flex: none; margin-right: 4.500px; }
.noexp { width: 6.500px; flex: none; }
.tree .sel { background: linear-gradient(#c8dff2, #c8dff2) no-repeat 8px 0 / 24px 100%; color: #222; }
.tree .dim { color: #aaa; }
.rollback { height: 1px; margin-top: .5px; background: #6fa5d3; flex: none; }
.pscroll { margin-top: auto; height: 7px; flex: none; display: flex; align-items: center; justify-content: space-between; color: #333; font-size: 4px; }
.pscroll i { font-style: normal; padding: 0 2px; }
.thumb { position: absolute; left: 8px; bottom: 0; width: 61px; height: 6px; background: #dcdcdc; border: 1px solid #cfcfcf; }
.grip { position: absolute; right: -3px; top: 128px; width: 3px; height: 9px; background: #ededed; border: 1px solid #cfcfcf; border-left: 0; }

.view { flex: 1; min-width: 0; background: #fff; }
.model { width: 527px; height: 276px; display: block; overflow: visible; }
.body { fill: url(#body); }
.edge-line { fill: none; stroke: #e43ae4; stroke-width: .9; }
.seam { fill: none; stroke: #c9a8f4; stroke-width: .8; }
.ghost { fill: none; stroke: #a81ec8; stroke-width: .6; }
.edge { stroke: #d81fd8; stroke-width: .9; }
.none { fill: none; }
.void { fill: #fff; }
.wall-fill { fill: url(#wall); }
.light-fill { fill: url(#wall-light); }
.wall-top-fill { fill: url(#wall-top); }
.low-fill { fill: #1a48d8; }
.low-white { fill: #e9f4fd; }
.low-dark { fill: #1c3fd2; }
.stripe-dark { stroke: #050b40; stroke-width: 1.200; fill: none; }
.stripe-soft { stroke: #3c74d6; stroke-width: .8; fill: none; }
.stripe-black { stroke: #050b40; stroke-width: .9; fill: none; }
.rim { fill: url(#inner); stroke: #e02ae0; stroke-width: 1; }
.seal { stroke: #0d1c70; stroke-width: 1; }
.cursor path { fill: none; stroke: #5f8a9a; stroke-width: 1; }
.ax-g { stroke: #1d7a2a; stroke-width: 1.600; }
.ag { fill: #1d7a2a; }
.ax-b { stroke: #1c2fc0; stroke-width: 1.600; }
.ab { fill: #1c2fc0; }
.ar { fill: #c01622; }
.ax { font: 5px "Liberation Sans", sans-serif; fill: #777; }

.taskpane { width: 18px; flex: none; padding-top: 11px; background: #fff; display: flex; flex-direction: column; }
.tp { height: 15px; flex: none; background: #cfcfcf; display: flex; align-items: center; justify-content: center; border-bottom: 1px solid #bcbcbc; margin-left: 1px; }
.tp.on { background: #fff; }
.tpi { width: 11px; height: 11px; }

.bottomtabs { height: 9px; flex: none; display: flex; background: #fff; border-bottom: 1px solid #c9c9c9; }
.nav { width: 28px; display: flex; background: #b9bdcc; align-items: center; justify-content: space-around; font-size: 4px; color: #666; padding: 0 1px; }
.nav i { font-style: normal; }
.btab { height: 100%; display: flex; align-items: center; justify-content: center; width: 37px; color: #666; background: #d2d2d2; font-size: 6.500px; }
.btab.on { width: 25px; color: #111; background: #fff; font-weight: 700; }
.status { height: 8px; flex: none; display: flex; align-items: center; background: #f2f2f2; color: #555; padding-left: 1px; }
.st-name { width: 533px; flex: none; }
.st-edit { width: 50px; flex: none; }
.st-unit { width: 26px; flex: none; }
.st-dd { width: 22px; flex: none; font-size: 4px; }
.st-gear { width: 6px; height: 6px; flex: none; }
```
